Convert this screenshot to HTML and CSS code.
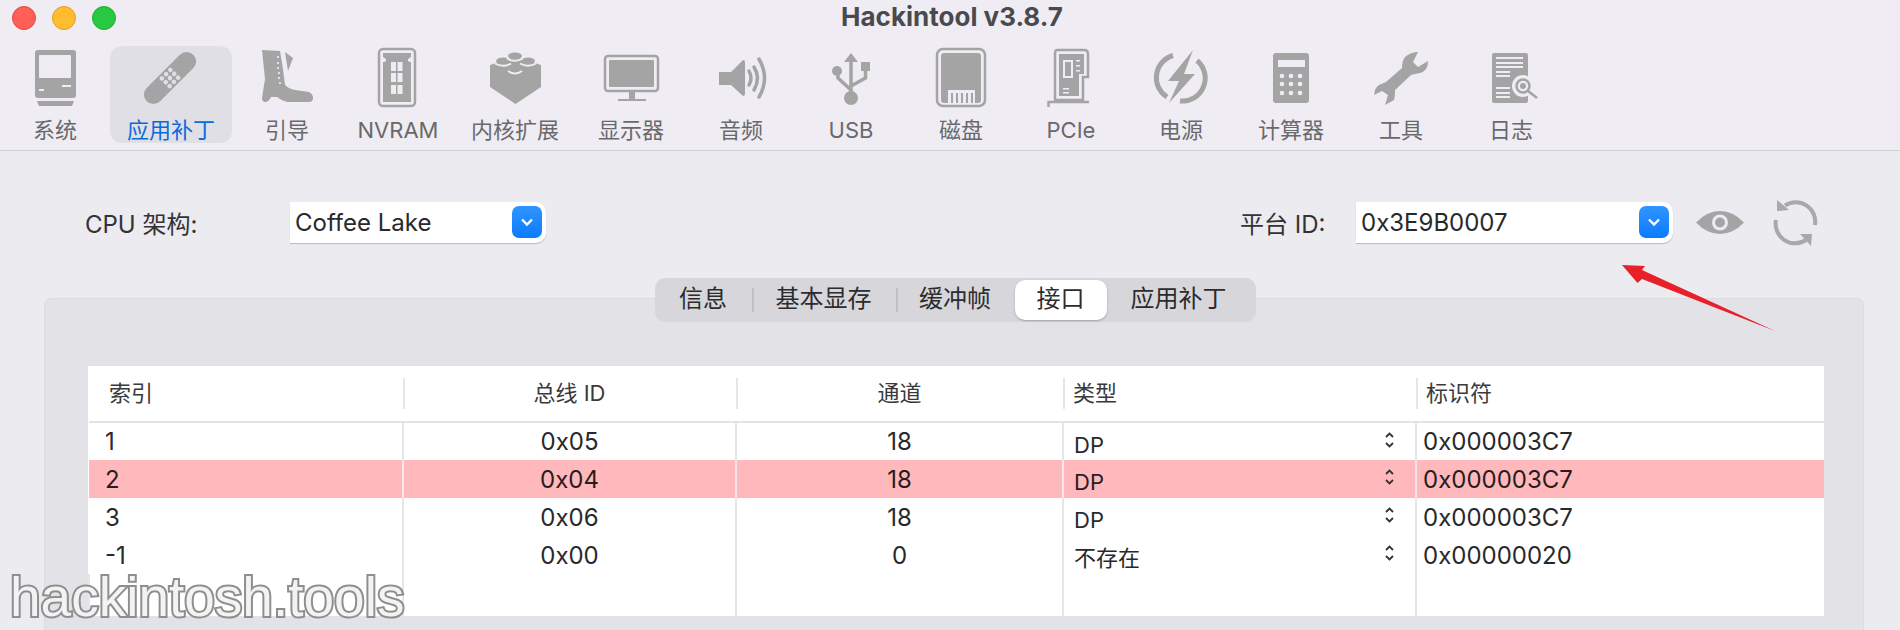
FILE: index.html
```html
<!DOCTYPE html>
<html lang="zh-CN">
<head>
    <meta charset="UTF-8">
    <title>Hackintool v3.8.7</title>
    <link rel="stylesheet" href="styles.css">
</head>
<body>
    <header class="window-head">
        <div class="titlebar">
            <div class="lights">
                <span class="light red"></span>
                <span class="light yellow"></span>
                <span class="light green"></span>
            </div>
            <div class="title">Hackintool v3.8.7</div>
        </div>
        <nav class="toolbar">
            <div class="tool">
                <svg class="tool-icon" viewBox="0 0 80 62">
                    <rect x="20" y="3" width="41" height="48" rx="3"/>
                    <rect class="cut" x="24" y="8" width="32" height="23" rx="1"/>
                    <rect class="cut" x="24" y="42" width="5" height="2"/>
                    <rect class="cut" x="47" y="38" width="9" height="2"/>
                    <path d="M22 54H59L57 59H24Z"/>
                </svg>
                <span>系统</span>
            </div>
            <div class="tool tool-wide active">
                <svg class="tool-icon" viewBox="0 0 80 62">
                    <g transform="rotate(-45 39 31)">
                        <rect x="6" y="21.5" width="66" height="19" rx="9.5"/>
                        <g class="cut">
                            <circle cx="33" cy="25.5" r="2.3"/><circle cx="39" cy="25.5" r="2.3"/><circle cx="45" cy="25.5" r="2.3"/>
                            <circle cx="33" cy="31" r="2.3"/><circle cx="39" cy="31" r="2.3"/><circle cx="45" cy="31" r="2.3"/>
                            <circle cx="33" cy="36.5" r="2.3"/><circle cx="39" cy="36.5" r="2.3"/><circle cx="45" cy="36.5" r="2.3"/>
                        </g>
                    </g>
                </svg>
                <span>应用补丁</span>
            </div>
            <div class="tool">
                <svg class="tool-icon" viewBox="0 0 80 62">
                    <path d="M15 3L33 4L36 22L38 38Q42 42 48 43L62 45Q66 47 66 51Q66 55 62 55L40 55Q35 54 30 50L24 50Q22 55 18 55Q15 55 15 51L18 32Z"/>
                    <path d="M38 5L46 11L41 24Z"/>
                    <g class="cut">
                        <circle cx="31" cy="10" r="1.1"/><circle cx="31" cy="16" r="1.1"/><circle cx="31" cy="21" r="1.1"/>
                        <circle cx="32" cy="26" r="1.1"/><circle cx="32" cy="31" r="1.1"/><circle cx="33" cy="36" r="1.1"/>
                    </g>
                </svg>
                <span>引导</span>
            </div>
            <div class="tool tool-nvram">
                <svg class="tool-icon" viewBox="0 0 80 62">
                    <rect class="line" x="21" y="2" width="36" height="57" rx="4"/>
                    <path d="M25 6H53V10Q49 12 50 14Q51 15 53 15V55H25V15Q27 15 28 14Q29 12 25 10Z"/>
                    <g class="cut">
                        <rect x="33" y="15" width="5" height="9"/><rect x="39.500" y="15" width="5" height="9"/>
                        <rect x="33" y="26" width="5" height="9"/><rect x="39.500" y="26" width="5" height="9"/>
                        <rect x="33" y="38" width="5" height="9"/><rect x="39.500" y="38" width="5" height="9"/>
                    </g>
                </svg>
                <span>NVRAM</span>
            </div>
            <div class="tool tool-wide">
                <svg class="tool-icon" viewBox="0 0 80 62">
                    <path d="M15 18L40 10L66 18V40L40.500 57L15 40Z"/>
                    <ellipse cx="40" cy="9" rx="7" ry="3.500"/>
                    <ellipse cx="28" cy="14" rx="7" ry="3.500"/>
                    <ellipse cx="53" cy="14" rx="7" ry="3.500"/>
                    <g class="stud">
                        <path d="M32 11.500Q40 16 48 11.500"/>
                        <path d="M20 16.500Q28 21 36 16.500"/>
                        <path d="M45 16.500Q53 21 61 16.500"/>
                        <path d="M33 24Q40 29 47 24"/>
                    </g>
                </svg>
                <span>内核扩展</span>
            </div>
            <div class="tool">
                <svg class="tool-icon" viewBox="0 0 80 62">
                    <rect class="line" x="14" y="9" width="53" height="35" rx="3"/>
                    <rect x="18" y="13" width="45" height="27" rx="1"/>
                    <rect x="38" y="45" width="6" height="7"/>
                    <rect x="27" y="52" width="28" height="2"/>
                </svg>
                <span>显示器</span>
            </div>
            <div class="tool">
                <svg class="tool-icon" viewBox="0 0 80 62">
                    <path d="M18 25H30L42 13Q44 13 44 15V47Q44 49 42 49L30 38H18Z"/>
                    <path class="wave" d="M48 24Q52 31 48 38"/>
                    <path class="wave" d="M53 20Q60 31 53 43"/>
                    <path class="wave" d="M58 12Q69 31 58 50"/>
                </svg>
                <span>音频</span>
            </div>
            <div class="tool">
                <svg class="tool-icon" viewBox="0 0 80 62">
                    <path d="M40 6L47 15H33Z"/>
                    <circle cx="40" cy="51" r="7"/>
                    <circle cx="26" cy="24" r="5"/>
                    <rect x="50" y="15" width="9" height="9"/>
                    <path class="usb" d="M40 14V48M27 26V31L40 43M54.500 24V31L40 39"/>
                </svg>
                <span>USB</span>
            </div>
            <div class="tool">
                <svg class="tool-icon" viewBox="0 0 80 62">
                    <rect class="line" x="16" y="2" width="48" height="57" rx="6"/>
                    <rect x="20" y="6" width="40" height="50" rx="3"/>
                    <rect class="cut" x="27" y="43" width="27" height="13"/>
                    <path d="M30 46h2v10h-2zM35 46h2v10h-2zM40 46h2v10h-2zM45 46h2v10h-2zM50 46h2v10h-2z"/>
                </svg>
                <span>磁盘</span>
            </div>
            <div class="tool">
                <svg class="tool-icon" viewBox="0 0 80 62">
                    <path class="line" d="M26 3H53Q57 3 57 7V30H52V53H24V7Q24 3 26 3Z"/>
                    <path d="M28 7H53V27H48V49H28Z"/>
                    <rect class="pcie-chip" x="33" y="14" width="8" height="16"/>
                    <g class="cut">
                        <rect x="45" y="13" width="4" height="1.500"/><rect x="45" y="18" width="4" height="1.500"/><rect x="45" y="23" width="4" height="1.500"/>
                        <rect x="32" y="41" width="6" height="1.500"/><rect x="32" y="45" width="6" height="1.500"/>
                    </g>
                    <path class="line" d="M17.500 60V55H58"/>
                </svg>
                <span>PCIe</span>
            </div>
            <div class="tool">
                <svg class="tool-icon" viewBox="0 0 80 62">
                    <path class="power" d="M32 8.500A23 23 0 0 0 26 50"/>
                    <path class="power" d="M56 13.500A23 23 0 0 1 39 54"/>
                    <path d="M52 3L27 34H38L28 56L54 27H43Z"/>
                </svg>
                <span>电源</span>
            </div>
            <div class="tool">
                <svg class="tool-icon" viewBox="0 0 80 62">
                    <rect x="22" y="6" width="36" height="50" rx="3"/>
                    <rect class="cut" x="27" y="13" width="27" height="7"/>
                    <g class="cut">
                        <circle cx="31" cy="29" r="2.300"/><circle cx="40" cy="29" r="2.300"/><circle cx="49" cy="29" r="2.300"/>
                        <circle cx="31" cy="37" r="2.300"/><circle cx="40" cy="37" r="2.300"/><circle cx="49" cy="37" r="2.300"/>
                        <circle cx="31" cy="46" r="2.300"/><circle cx="40" cy="46" r="2.300"/><circle cx="49" cy="46" r="2.300"/>
                    </g>
                </svg>
                <span>计算器</span>
            </div>
            <div class="tool">
                <svg class="tool-icon" viewBox="0 0 80 62">
                    <path d="M57 5L52 15L57 20L67 14Q67 24 59 26L50 28L34 43Q34 50 33 53L24 58L27 48L21 44L13 48Q14 40 18 38L25 35L41 21Q41 14 44 10Q50 5 57 5Z"/>
                </svg>
                <span>工具</span>
            </div>
            <div class="tool">
                <svg class="tool-icon" viewBox="0 0 80 62">
                    <rect x="21" y="6" width="36" height="50" rx="2"/>
                    <g class="cut">
                        <rect x="25" y="10" width="27" height="2"/><rect x="25" y="15" width="27" height="2"/><rect x="25" y="19" width="27" height="2"/>
                        <rect x="25" y="24" width="14" height="2"/><rect x="25" y="28" width="14" height="2"/>
                        <rect x="25" y="40" width="14" height="2"/><rect x="25" y="45" width="14" height="2"/><rect x="25" y="49" width="14" height="2"/>
                        <circle cx="52" cy="39" r="11"/>
                    </g>
                    <circle class="line" cx="52" cy="39" r="6.500"/>
                    <circle cx="52" cy="39" r="3"/>
                    <path class="line" d="M57 44L66 51"/>
                </svg>
                <span>日志</span>
            </div>
        </nav>
    </header>

    <main class="content">
        <div class="config-row">
            <label class="config-label cpu-label">CPU 架构:</label>
            <div class="select cpu-select">
                <span>Coffee Lake</span>
                <span class="select-btn"><svg viewBox="0 0 14 10"><path d="M2 2.500L7 7.500L12 2.500"/></svg></span>
            </div>
            <label class="config-label platform-label">平台 ID:</label>
            <div class="select platform-select">
                <span>0x3E9B0007</span>
                <span class="select-btn"><svg viewBox="0 0 14 10"><path d="M2 2.500L7 7.500L12 2.500"/></svg></span>
            </div>
            <svg class="eye-icon" viewBox="0 0 48 23">
                <path d="M0 11.500Q11 0 24 0Q37 0 48 11.500Q37 23 24 23Q11 23 0 11.500Z"/>
                <circle class="cut" cx="24" cy="11.500" r="8"/>
                <circle cx="24" cy="11.500" r="5"/>
            </svg>
            <svg class="refresh-icon" viewBox="0 0 45 47">
                <path class="refresh-arc" d="M12 6.500A19.500 19.500 0 0 1 42 26"/>
                <path class="refresh-arc" d="M33 41A19.500 19.500 0 0 1 3 21"/>
                <path d="M4 1L16 11L4 12Z"/>
                <path d="M39 35L38 47L27 35Z"/>
            </svg>
        </div>

        <section class="panel">
            <div class="tabs">
                <div class="tab">信息</div>
                <div class="tab tab-sep">基本显存</div>
                <div class="tab tab-sep">缓冲帧</div>
                <div class="tab tab-active">接口</div>
                <div class="tab tab-last">应用补丁</div>
            </div>

            <table class="ports">
                <colgroup>
                    <col class="col-index">
                    <col class="col-bus">
                    <col class="col-pipe">
                    <col class="col-type">
                    <col class="col-id">
                </colgroup>
                <thead>
                    <tr>
                        <th class="first">索引</th>
                        <th class="center">总线 ID</th>
                        <th class="center">通道</th>
                        <th>类型</th>
                        <th>标识符</th>
                    </tr>
                </thead>
                <tbody>
                    <tr>
                        <td class="first">1</td>
                        <td class="center">0x05</td>
                        <td class="center">18</td>
                        <td><div class="type-cell"><span>DP</span><svg class="updown" viewBox="0 0 11 16"><path d="M2 5L5.500 1.500L9 5M2 11L5.500 14.500L9 11"/></svg></div></td>
                        <td class="ident">0x000003C7</td>
                    </tr>
                    <tr class="highlight">
                        <td class="first">2</td>
                        <td class="center">0x04</td>
                        <td class="center">18</td>
                        <td><div class="type-cell"><span>DP</span><svg class="updown" viewBox="0 0 11 16"><path d="M2 5L5.500 1.500L9 5M2 11L5.500 14.500L9 11"/></svg></div></td>
                        <td class="ident">0x000003C7</td>
                    </tr>
                    <tr>
                        <td class="first">3</td>
                        <td class="center">0x06</td>
                        <td class="center">18</td>
                        <td><div class="type-cell"><span>DP</span><svg class="updown" viewBox="0 0 11 16"><path d="M2 5L5.500 1.500L9 5M2 11L5.500 14.500L9 11"/></svg></div></td>
                        <td class="ident">0x000003C7</td>
                    </tr>
                    <tr>
                        <td class="first">-1</td>
                        <td class="center">0x00</td>
                        <td class="center">0</td>
                        <td><div class="type-cell"><span>不存在</span><svg class="updown" viewBox="0 0 11 16"><path d="M2 5L5.500 1.500L9 5M2 11L5.500 14.500L9 11"/></svg></div></td>
                        <td class="ident">0x00000020</td>
                    </tr>
                    <tr class="filler">
                        <td></td><td></td><td></td><td></td><td></td>
                    </tr>
                </tbody>
            </table>
        </section>
    </main>

    <svg class="red-arrow" viewBox="0 0 170 80">
        <path d="M7 5L30 6L27 10L160 71L27 19L22.500 23Z"/>
    </svg>
    <div class="watermark">hackintosh.tools</div>
</body>
</html>
```

FILE: styles.css
```css
html, body {
    margin: 0;
    padding: 0;
    height: 630px;
    overflow: hidden;
}
body {
    position: relative;
    font-family: Inter, "Noto Sans CJK SC", sans-serif;
    background-color: #ecebf0;
    color: #2a2a2c;
}

/* window header */
.window-head {
    height: 150px;
    background-color: #efedf3;
    border-bottom: 1.5px solid #cfced3;
    box-sizing: content-box;
}
.titlebar {
    display: grid;
    grid-template-columns: 1fr auto 1fr;
    align-items: center;
    height: 36px;
    padding: 0 0 10px 12px;
}
.lights {
    display: flex;
    gap: 16px;
}
.light {
    width: 24px;
    height: 24px;
    border-radius: 50%;
    box-sizing: border-box;
}
.light.red { background: #fe5f57; border: 1px solid #e2463f; }
.light.yellow { background: #febc2e; border: 1px solid #dfa023; }
.light.green { background: #28c840; border: 1px solid #1dad2b; }
.title {
    font-size: 26px;
    font-weight: 700;
    color: #4a4a4e;
    transform: translate(-4px, -2px);
}

.toolbar {
    display: flex;
}
.tool {
    width: 110px;
    height: 97px;
    display: flex;
    flex-direction: column;
    align-items: center;
    font-size: 22px;
    color: #69696c;
    border-radius: 12px;
}
.tool span {
    line-height: 26px;
    margin-top: 8px;
}
.tool-wide { width: 122px; }
.tool-nvram { width: 112px; }
.tool.active {
    background-color: #e0dfe5;
    color: #0a6bdc;
}
.tool-icon {
    width: 80px;
    height: 62px;
    margin-top: 1px;
    fill: #a4a4a4;
    flex: none;
}
.tool-icon .cut { fill: #efedf3; }
.tool.active .cut { fill: #e0dfe5; }
.tool-icon .line {
    fill: none;
    stroke: #a4a4a4;
    stroke-width: 2.5;
}
.tool-icon .stud {
    fill: none;
    stroke: #efedf3;
    stroke-width: 2;
}
.tool-icon .wave {
    fill: none;
    stroke: #a4a4a4;
    stroke-width: 3.5;
    stroke-linecap: round;
}
.tool-icon .usb {
    fill: none;
    stroke: #a4a4a4;
    stroke-width: 3.5;
}
.tool-icon .power {
    fill: none;
    stroke: #a4a4a4;
    stroke-width: 5;
}
.tool-icon .pcie-chip {
    fill: #a4a4a4;
    stroke: #efedf3;
    stroke-width: 2;
}

/* cpu / platform row */
.content {
    padding-top: 47.5px;
}
.config-row {
    display: flex;
    align-items: center;
    height: 47px;
    padding: 0 82px 0 85px;
}
.config-label {
    font-size: 24px;
    color: #333336;
}
.cpu-label { width: 205px; }
.platform-label {
    margin-left: auto;
    width: 116px;
}
.select {
    display: flex;
    align-items: center;
    justify-content: space-between;
    height: 41px;
    box-sizing: border-box;
    padding: 0 4px 0 5px;
    background-color: #fff;
    border-radius: 0 10px 10px 0;
    box-shadow: 0 1px 1px rgba(0, 0, 0, 0.22);
    font-size: 24px;
    color: #29292b;
}
.cpu-select { width: 256px; }
.platform-select {
    width: 317px;
    margin-right: 23px;
}
.select-btn {
    width: 30px;
    height: 32px;
    border-radius: 7px;
    background: linear-gradient(#2f95ff, #0b7bff);
    display: flex;
    align-items: center;
    justify-content: center;
}
.select-btn svg {
    width: 14px;
    height: 10px;
    fill: none;
    stroke: #fff;
    stroke-width: 2.4;
}
.eye-icon {
    width: 48px;
    height: 23px;
    margin-right: 29px;
    fill: #a4a4a4;
}
.eye-icon .cut { fill: #ecebf0; }
.refresh-icon {
    width: 45px;
    height: 47px;
    fill: #a9a9a9;
}
.refresh-arc {
    fill: none;
    stroke: #a9a9a9;
    stroke-width: 4;
}

/* panel with tabs and table */
.panel {
    margin: 52px 36px 0 44px;
    height: 332px;
    box-sizing: border-box;
    padding: 0 40px 0 44px;
    background-color: #e3e2e7;
    border-top: 1px solid #dcdbe0;
    border-left: 1px solid #dcdbe0;
    border-right: 1px solid #dcdbe0;
    border-radius: 8px 8px 0 0;
}
.tabs {
    display: grid;
    grid-template-columns: 97px 144px 119px 92px 149px;
    align-items: center;
    width: 601px;
    height: 44px;
    margin: -21px auto 44px;
    background-color: #d7d6db;
    border-radius: 10px;
    transform: translateX(-1px);
}
.tab {
    height: 40px;
    line-height: 38px;
    text-align: center;
    font-size: 24px;
    color: #2c2c2e;
}
.tab-sep {
    background: linear-gradient(#c2c1c6, #c2c1c6) left center / 2px 24px no-repeat;
}
.tab-active {
    background: #fff;
    border-radius: 10px;
    box-shadow: 0 1px 2px rgba(0, 0, 0, 0.25);
}
.tab-last {
    padding-right: 5px;
}

.ports {
    width: 1735px;
    height: 250px;
    table-layout: fixed;
    border-collapse: collapse;
    background-color: #fff;
    margin-left: -1px;
    font-size: 24px;
    line-height: 26px;
    color: #29292b;
}
.col-index { width: 314px; }
.col-bus { width: 333px; }
.col-pipe { width: 327px; }
.col-type { width: 353px; }
.col-id { width: 408px; }
.ports th {
    box-sizing: border-box;
    height: 56px;
    padding: 0 0 1px 10px;
    font-weight: 400;
    font-size: 22px;
    text-align: left;
    color: #3a3a3c;
    border-bottom: 2px solid #e3e3e5;
    background: linear-gradient(#e6e6e8, #e6e6e8) left 12px / 2px 31px no-repeat;
}
.ports th.first {
    padding-left: 20px;
    background: none;
}
.ports th.center,
.ports td.center {
    padding-left: 0;
    text-align: center;
}
.ports td {
    box-sizing: border-box;
    height: 38px;
    padding: 2px 0 0 10px;
    border-left: 2px solid #e6e6e8;
}
.ports td.first {
    padding-left: 16px;
    border-left: none;
}
.ports td.ident {
    padding-left: 6px;
}
.ports .highlight td {
    background-color: #ffb9bc;
    border-left-color: #f7e6e7;
    color: #2a1c1d;
}
.ports .filler td {
    height: auto;
}
.type-cell {
    display: flex;
    align-items: center;
    justify-content: space-between;
    height: 26px;
    padding-right: 20px;
    font-size: 22px;
}
.type-cell span {
    margin-top: 5px;
}
.updown {
    width: 11px;
    height: 16px;
    margin-top: -5px;
    fill: none;
    stroke: #333;
    stroke-width: 1.8;
}

/* things laid over the window */
.red-arrow {
    position: absolute;
    left: 1615px;
    top: 260px;
    width: 170px;
    height: 80px;
    fill: #e8202a;
}
.watermark {
    position: absolute;
    left: 10px;
    top: 566px;
    font-family: "Liberation Sans", sans-serif;
    font-size: 55px;
    line-height: 62px;
    color: #f3f3f3;
    -webkit-text-stroke: 4px #8e8e8e;
    paint-order: stroke fill;
}
```
